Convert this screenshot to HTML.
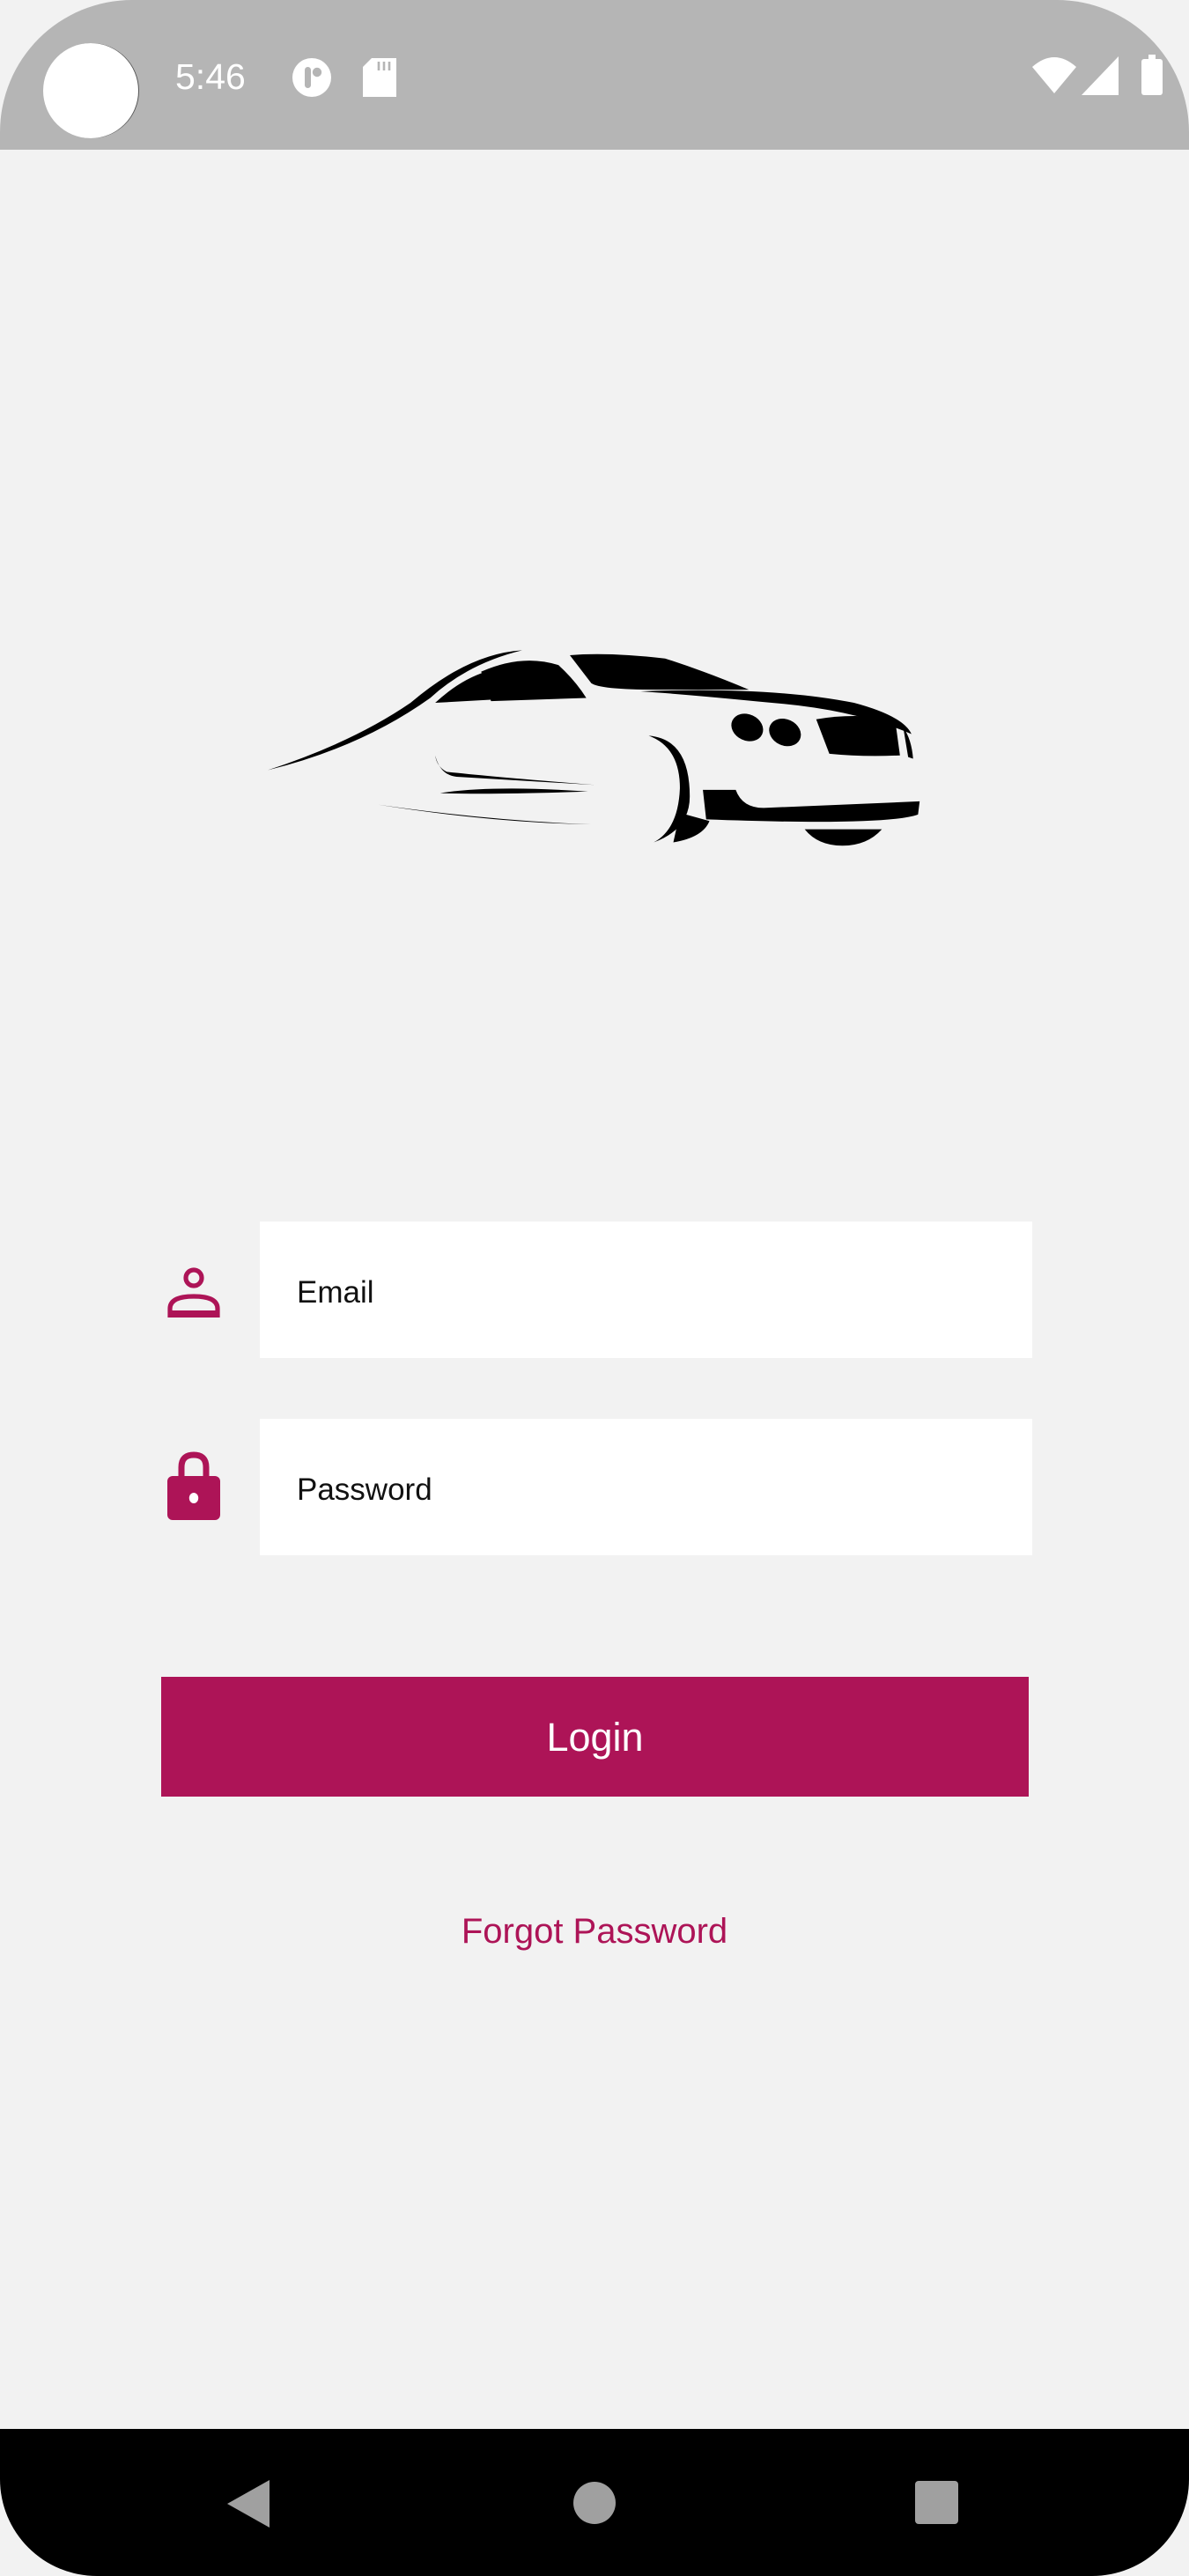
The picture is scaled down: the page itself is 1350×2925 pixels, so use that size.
<!DOCTYPE html>
<html><head><meta charset="utf-8">
<style>
html,body{margin:0;padding:0}
body{width:1350px;height:2925px;background:#f2f2f2;position:relative;overflow:hidden;font-family:"Liberation Sans",Roboto,sans-serif}
.status{position:absolute;left:0;top:0;width:1350px;height:170px;background:#b5b5b5;border-radius:150px 150px 0 0}
.cam{position:absolute;left:49px;top:49px;width:108px;height:108px;border-radius:50%;background:#fff;box-shadow:1px 0 0 #555}
.time{position:absolute;left:199px;top:64px;font-size:41px;color:#fff}
.box{position:absolute;left:295px;width:877px;height:155px;background:#fff}
.box span{position:absolute;left:42px;top:50%;transform:translateY(-42%);font-size:35px;color:#111}
.btn{position:absolute;left:183px;top:1904px;width:985px;height:136px;background:#ad1457;color:#fff;font-size:45px;text-align:center;line-height:138px}
.forgot{position:absolute;left:0;width:1350px;top:2171px;text-align:center;color:#ad1457;font-size:40px}
.nav{position:absolute;left:0;top:2758px;width:1350px;height:167px;background:#000;border-radius:0 0 110px 110px}
</style></head><body>
<div class="status">
 <div class="cam"></div>
 <div class="time">5:46</div>
 <svg style="position:absolute;left:330px;top:64px" width="48" height="48" viewBox="0 0 24 24"><circle cx="12" cy="12" r="11" fill="#fff"/><rect x="8" y="6" width="3.5" height="12" rx="1.7" fill="#b5b5b5"/><circle cx="15" cy="9" r="2.6" fill="#b5b5b5"/></svg>
 <svg style="position:absolute;left:412px;top:66px" width="38" height="44" viewBox="0 0 19 22"><path d="M5 0H19V22H0V5Z" fill="#fff"/><path d="M9 2v5M12 2v5M15 2v5" stroke="#b5b5b5" stroke-width="1.3"/></svg>
 <svg style="position:absolute;left:1172px;top:64px" width="50" height="42" viewBox="0 0 25 21"><path d="M0 6Q12.5-5 25 6L12.5 21Z" fill="#fff"/></svg>
 <svg style="position:absolute;left:1228px;top:64px" width="42" height="44" viewBox="0 0 21 22"><path d="M21 0V22H0Z" fill="#fff"/></svg>
 <svg style="position:absolute;left:1296px;top:62px" width="24" height="46" viewBox="0 0 12 23"><rect x="4" y="0" width="4" height="3" fill="#fff"/><rect x="0" y="2.5" width="12" height="20.5" rx="1.5" fill="#fff"/></svg>
</div>

<svg style="position:absolute;left:0;top:0" width="1350" height="2925" viewBox="0 0 724 1568.7">
 <g fill="#000">
  <path d="M163 469Q215 452 250 428Q285 398 318 396Q285 404 262 425Q220 455 163 469Z"/>
  <path d="M265 428Q280 414 296 409L300 426Z"/>
  <path d="M293 409Q318 398 340 405Q350 414 357 425L299 427Z"/>
  <path d="M347 399Q370 397 405 401Q430 409 456 420L400 420Q365 420 360 416Z"/>
  <path d="M390 421Q470 418 520 428Q550 436 555 447Q520 432 470 428Q420 423 390 421Z"/>
  <ellipse cx="455" cy="443" rx="10" ry="8" transform="rotate(25 455 443)"/>
  <ellipse cx="478" cy="446" rx="10" ry="8" transform="rotate(25 478 446)"/>
  <path d="M497 438Q520 434 545 438L548 460Q525 461 505 459Z"/>
  <path d="M550 443Q555 450 556 462L553 461Z"/>
  <path d="M265 460Q268 472 278 473L362 478Q300 473 272 470Q266 467 265 460Z"/>
  <path d="M268 483Q300 478 358 482Q300 484 268 483Z"/>
  <path d="M230 490Q300 500 360 502Q300 501 230 490Z"/>
  <path d="M395 448Q420 450 420 485Q420 505 398 513Q413 505 414 480Q414 455 395 448Z"/>
  <path d="M414 495L432 500Q428 510 410 513Z"/>
  <path d="M428 481L448 481Q452 492 465 492L560 488L559 496Q540 503 430 499Z"/>
  <path d="M490 505L537 505Q528 515 513 515Q498 515 490 505Z"/>
 </g>
</svg>

<div class="box" style="top:1387px"><span>Email</span></div>
<div class="box" style="top:1611px"><span>Password</span></div>
<svg style="position:absolute;left:190px;top:1436px" width="60" height="60" viewBox="0 0 30 30"><circle cx="15" cy="7.5" r="4.5" fill="none" stroke="#ad1457" stroke-width="2.6"/><path d="M1.5 29V25Q1.5 18 15 18Q28.5 18 28.5 25V29Z" fill="none" stroke="#ad1457" stroke-width="2.6"/><path d="M1.5 27.5H28.5" stroke="#ad1457" stroke-width="3"/></svg>
<svg style="position:absolute;left:190px;top:1648px" width="60" height="78" viewBox="0 0 30 39"><path d="M8 16V9Q8 2 15 2Q22 2 22 9V16" fill="none" stroke="#ad1457" stroke-width="3.5"/><rect x="0" y="14" width="30" height="25" rx="3" fill="#ad1457"/><ellipse cx="15" cy="26.5" rx="2.6" ry="3" fill="#fff"/></svg>

<div class="btn">Login</div>
<div class="forgot">Forgot Password</div>

<div class="nav">
 <svg style="position:absolute;left:258px;top:58px" width="48" height="54" viewBox="0 0 24 27"><path d="M24 0V27L0 13.5Z" fill="#a0a0a0"/></svg>
 <div style="position:absolute;left:651px;top:60px;width:48px;height:48px;border-radius:50%;background:#a0a0a0"></div>
 <div style="position:absolute;left:1039px;top:59px;width:49px;height:49px;border-radius:4px;background:#a0a0a0"></div>
</div>
</body></html>
